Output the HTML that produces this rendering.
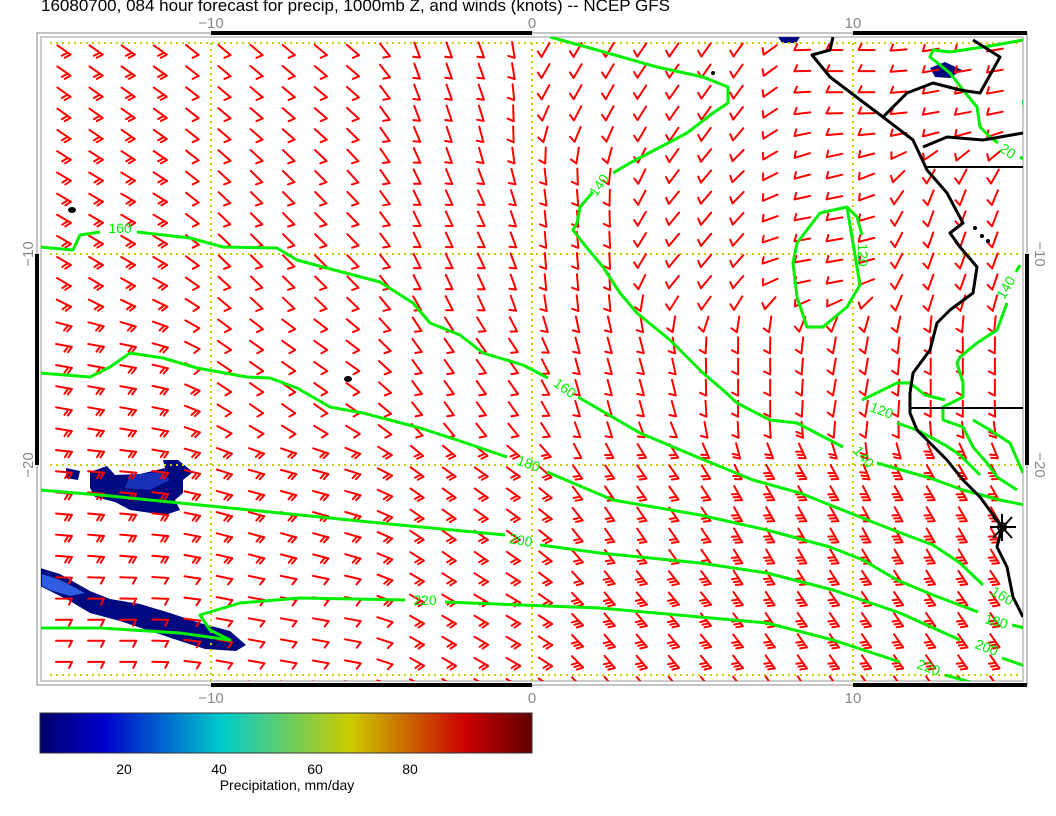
<!DOCTYPE html>
<html><head><meta charset="utf-8"><style>
html,body{margin:0;padding:0;background:#fff;width:1056px;height:816px;overflow:hidden}
svg{display:block}
text{font-family:"Liberation Sans",sans-serif}
</style></head><body>
<svg id="s" width="1056" height="816" viewBox="0 0 1056 816" xmlns="http://www.w3.org/2000/svg">
<defs>
<linearGradient id="cb" x1="0" x2="1" y1="0" y2="0">
<stop offset="0" stop-color="#00006a"/><stop offset="0.13" stop-color="#0000cc"/>
<stop offset="0.37" stop-color="#00cccc"/><stop offset="0.5" stop-color="#66cc66"/>
<stop offset="0.63" stop-color="#cccc00"/><stop offset="0.865" stop-color="#cc0000"/>
<stop offset="1" stop-color="#600000"/></linearGradient>
<clipPath id="cl"><rect x="41" y="37" width="982" height="644"/></clipPath>
</defs>
<text x="41" y="11" font-size="17" fill="#000">16080700, 084 hour forecast for precip, 1000mb Z, and winds (knots) -- NCEP GFS</text>
<rect x="37" y="33" width="990" height="652" fill="none" stroke="#888" stroke-width="1"/>
<rect x="41" y="37" width="982" height="644" fill="none" stroke="#ccc" stroke-width="2"/>
<g fill="#000">
<rect x="211" y="31" width="321" height="4"/><rect x="853" y="31" width="174" height="4"/>
<rect x="211" y="683" width="321" height="4"/><rect x="853" y="683" width="174" height="4"/>
<rect x="35" y="254" width="4" height="211"/><rect x="1025" y="254" width="4" height="211"/>
</g>
<g font-size="15" fill="#888" text-anchor="middle">
<text x="211" y="28">−10</text><text x="532" y="28">0</text><text x="853" y="28">10</text>
<text x="211" y="703">−10</text><text x="532" y="703">0</text><text x="853" y="703">10</text>
<text transform="translate(33,254) rotate(-90)">−10</text><text transform="translate(33,465) rotate(-90)">−20</text>
<text transform="translate(1035,254) rotate(90)">−10</text><text transform="translate(1035,465) rotate(90)">−20</text>
</g>
<g clip-path="url(#cl)">
<g fill="#000a80">
<polygon points="90,472 107,466 115,475 140,474 165,468 163,460 178,460 193,472 183,480 183,493 175,500 180,510 165,515 130,510 115,502 95,497 90,488"/>
<polygon points="66,468 80,471 78,480 66,478"/>
<polygon points="40,568 60,574 90,591 110,599 140,604 170,613 200,623 230,631 246,645 236,651 205,649 180,641 150,631 120,621 90,613 70,601 50,591 40,586"/>
<polygon points="778,37 800,37 796,43 782,43"/>
<polygon points="930,68 945,62 962,70 950,78 935,77"/>
</g>
<polygon points="42,574 60,580 85,593 70,596 50,590 42,586" fill="#2f5fe0"/>
<polygon points="130,475 160,472 170,480 150,490 125,488" fill="#1830b8"/>
<g stroke="#cccc00" stroke-width="2" stroke-dasharray="2 4" fill="none">
<line x1="211" y1="43" x2="211" y2="681"/><line x1="532" y1="43" x2="532" y2="681"/><line x1="853" y1="43" x2="853" y2="681"/>
<line x1="50" y1="43" x2="1020" y2="43"/><line x1="50" y1="254" x2="1020" y2="254"/><line x1="50" y1="465" x2="1020" y2="465"/><line x1="50" y1="675" x2="1020" y2="675"/>
</g>
<g id="barbs" stroke="#ff0000" stroke-width="2" fill="none" stroke-linecap="round"></g>
<g stroke="#00ee00" stroke-width="3" fill="none" stroke-linejoin="round">
<polyline points="40,247 73,250 80,235 100,232"/>
<polyline points="137,232 190,238 223,247 277,248 297,260 323,267 380,282 413,303 430,323 460,335 483,353 523,365 548,378"/>
<polyline points="578,397 640,433 697,457 753,480 800,493 860,517 893,530 933,545 960,563 983,585"/>
<polyline points="40,373 90,377 110,367 130,353 163,358 197,368 247,377 270,378 297,388 330,407 363,413 420,428 457,440 507,457"/>
<polyline points="547,472 613,500 700,515 767,530 830,547 863,560 897,580 933,595 978,612"/>
<polyline points="1012,625 1025,628"/>
<polyline points="40,490 100,495 200,505 300,515 400,525 505,535"/>
<polyline points="540,545 600,553 700,563 767,573 833,590 900,613 960,640"/>
<polyline points="1002,658 1025,666"/>
<polyline points="40,628 100,628 180,633 230,640 210,630 200,615 240,603 300,598 405,600"/>
<polyline points="445,602 600,608 700,617 767,623 833,640 900,662"/>
<polyline points="945,675 970,682"/>
<polyline points="550,37 590,48 657,67 703,77 728,87 728,103 713,113 687,133 630,163 613,173"/>
<polyline points="593,192 580,207 577,223 573,230 583,243 603,267 620,293 637,313 670,340 703,373 723,390 737,403 770,420 797,423 843,447"/>
<polyline points="877,463 930,478 963,490 1000,500 1025,505"/>
<polygon points="847,207 820,213 797,243 793,263 797,297 807,327 823,327 847,307 860,285"/>
<polyline points="862,235 857,217 847,207"/>
<polyline points="1023,40 990,46 950,52 933,50 930,57 950,73 963,90 977,107 980,127 990,137 998,143"/>
<polyline points="1020,157 1025,160"/>
<polyline points="1023,100 1025,110"/>
<polyline points="1020,265 1016,272"/>
<polyline points="1007,303 997,330 977,343 960,357 957,363 963,383 963,397 943,407 943,420 963,427 973,447 987,463 997,477 1017,490"/>
<polyline points="973,420 990,430 1010,443 1023,473"/>
<polyline points="862,400 897,383 910,383 925,395 945,400"/>
<polyline points="897,423 917,430 945,445 960,455 980,475"/>
</g>
<g font-size="14" fill="#00ee00" text-anchor="middle">
<text x="120" y="233">160</text>
<text transform="translate(562,392) rotate(35)">160</text>
<text transform="translate(527,468) rotate(20)">180</text>
<text transform="translate(520,545) rotate(10)">200</text>
<text x="425" y="605">220</text>
<text transform="translate(603,188) rotate(-55)">140</text>
<text transform="translate(858,255) rotate(90)">120</text>
<text transform="translate(880,415) rotate(20)">120</text>
<text transform="translate(860,460) rotate(50)">140</text>
<text transform="translate(1010,290) rotate(-60)">140</text>
<text transform="translate(1005,155) rotate(35)">20</text>
<text transform="translate(1000,600) rotate(30)">160</text>
<text transform="translate(995,626) rotate(15)">180</text>
<text transform="translate(985,652) rotate(20)">200</text>
<text transform="translate(927,672) rotate(20)">220</text>
</g>
<g stroke="#000" stroke-width="3" fill="none" stroke-linejoin="round">
<polyline points="833,37 830,50 812,55 830,77 863,102 883,117 913,140 927,170 947,193 963,223 950,233 960,247 977,267 973,293 950,310 937,323 930,350 913,373 910,393 910,413 917,430 947,460 963,480 980,497 1002,527 997,547 1007,567 1013,597 1023,617"/>
<polyline points="883,117 907,93 933,83 960,90 980,93 1000,57 973,40"/>
<polyline points="923,147 947,137 983,140 1023,133"/>
<polyline points="927,167 1027,167" stroke-width="2"/>
<polyline points="910,408 1027,408" stroke-width="2"/>
</g>
<g fill="#000"><ellipse cx="72" cy="210" rx="4" ry="3"/><ellipse cx="348" cy="379" rx="4" ry="3"/>
<circle cx="713" cy="73" r="2"/><circle cx="975" cy="228" r="2"/><circle cx="982" cy="236" r="2"/><circle cx="988" cy="241" r="2"/></g>
</g>
<g stroke="#000" stroke-width="2"><line x1="990" y1="527" x2="1016" y2="527"/><line x1="1002" y1="514" x2="1002" y2="541"/><line x1="993" y1="517" x2="1012" y2="538"/><line x1="993" y1="538" x2="1012" y2="517"/></g>
<circle cx="1002" cy="527" r="4" fill="none" stroke="#000" stroke-width="2"/>
<rect x="40" y="713" width="492" height="40" fill="url(#cb)" stroke="#333" stroke-width="1"/>
<g font-size="14" fill="#000" text-anchor="middle">
<text x="124" y="774">20</text><text x="219" y="774">40</text><text x="315" y="774">60</text><text x="410" y="774">80</text>
<text x="287" y="790">Precipitation, mm/day</text></g>
</svg>
<script>
(function(){
var P=[[80,60,35,2],[300,60,40,1],[480,60,70,1],[560,60,120,1],[700,60,125,1],[850,60,180,1],[950,60,170,1],
[80,250,30,2],[300,250,45,1],[480,250,65,1],[560,250,85,1],[700,250,130,1],[820,250,170,1],[950,250,110,1],
[80,380,10,2],[300,380,35,1],[480,380,55,1],[620,380,75,1],[760,380,90,1],[850,380,100,1],[950,380,90,1],
[80,500,5,2],[300,500,15,2],[480,500,35,2],[650,500,55,2],[800,500,60,3],[950,500,60,3],
[80,640,0,1],[300,640,10,1],[480,640,30,2],[650,640,50,3],[850,640,55,3],[980,640,55,3]];
var g=document.getElementById('barbs'),h='';
for(var r=0;r<31;r++){for(var c=0;c<30;c++){
var x=64+c*32.1,y=50+r*21.1;if(y>690)continue;
var sx=0,sy=0,st=0,sw=0;
for(var i=0;i<P.length;i++){var dx=x-P[i][0],dy=y-P[i][1];var w=1/Math.pow(dx*dx+dy*dy+400,2.5);
var a=P[i][2]*Math.PI/180;sx+=w*Math.cos(a);sy+=w*Math.sin(a);st+=w*P[i][3];sw+=w;}
var n=Math.sqrt(sx*sx+sy*sy),ux=sx/n,uy=sy/n,nt=Math.round(st/sw);
var bx=x-ux*8,by=y-uy*8,ex=x+ux*8,ey=y+uy*8;
var d='M'+bx.toFixed(1)+' '+by.toFixed(1)+'L'+ex.toFixed(1)+' '+ey.toFixed(1);
var tx=-uy*6-ux*3,ty=ux*6-uy*3;
for(var k=0;k<nt;k++){var px=ex-ux*k*3.5,py=ey-uy*k*3.5;d+='M'+px.toFixed(1)+' '+py.toFixed(1)+'l'+tx.toFixed(1)+' '+ty.toFixed(1);}
h+='<path d="'+d+'"/>';}}
g.innerHTML=h;
})();
</script>
</body></html>
